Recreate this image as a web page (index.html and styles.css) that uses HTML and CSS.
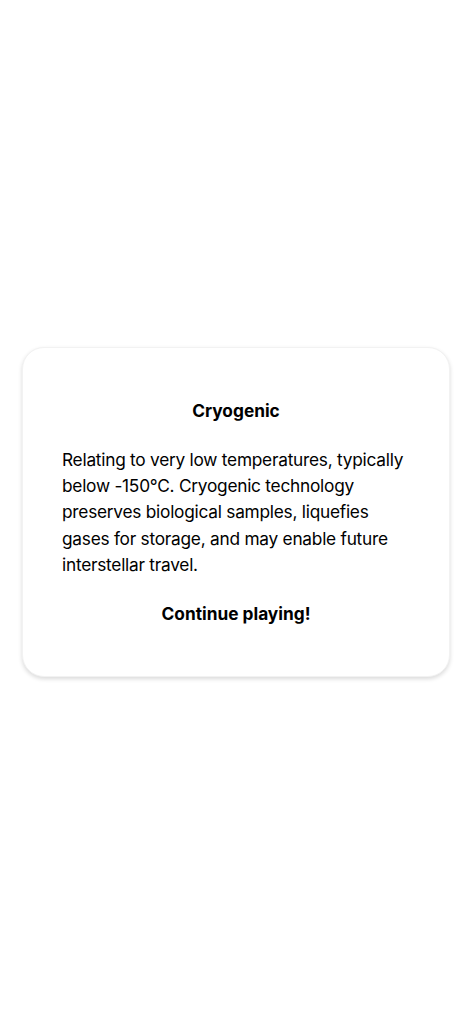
FILE: index.html
```html
<!DOCTYPE html>
<html>
<head>
<meta charset="utf-8">
<link rel="stylesheet" href="styles.css">
</head>
<body>
<div class="screen">
  <div class="card">
    <h2 class="title">Cryogenic</h2>
    <p class="body">Relating to very low temperatures, typically below -150°C. Cryogenic technology preserves biological samples, liquefies gases for storage, and may enable future interstellar travel.</p>
    <div class="cta">Continue playing!</div>
  </div>
</div>
</body>
</html>
```

FILE: styles.css
```css
html, body {
  margin: 0;
  padding: 0;
  background: #ffffff;
}
body {
  font-family: Inter, "Liberation Sans", sans-serif;
  color: #000;
}
.screen {
  width: 472px;
  height: 1024px;
  display: flex;
  align-items: center;
  justify-content: center;
}
.card {
  width: 428px;
  box-sizing: border-box;
  padding: 50px 39px 49px;
  background: #fff;
  border-radius: 22px;
  border: 1px solid #f2f2f2;
  box-shadow: 0 2px 4px rgba(0,0,0,0.15);
  display: flex;
  flex-direction: column;
  gap: 23px;
}
.title {
  margin: 0;
  font-size: 17.3px;
  line-height: 26px;
  font-weight: 700;
  text-align: center;
}
.body {
  margin: 0;
  font-size: 17.3px;
  line-height: 26.3px;
  font-weight: 400;
  letter-spacing: -0.25px;
}
.cta {
  font-size: 17.3px;
  line-height: 26px;
  font-weight: 700;
  text-align: center;
}
```
